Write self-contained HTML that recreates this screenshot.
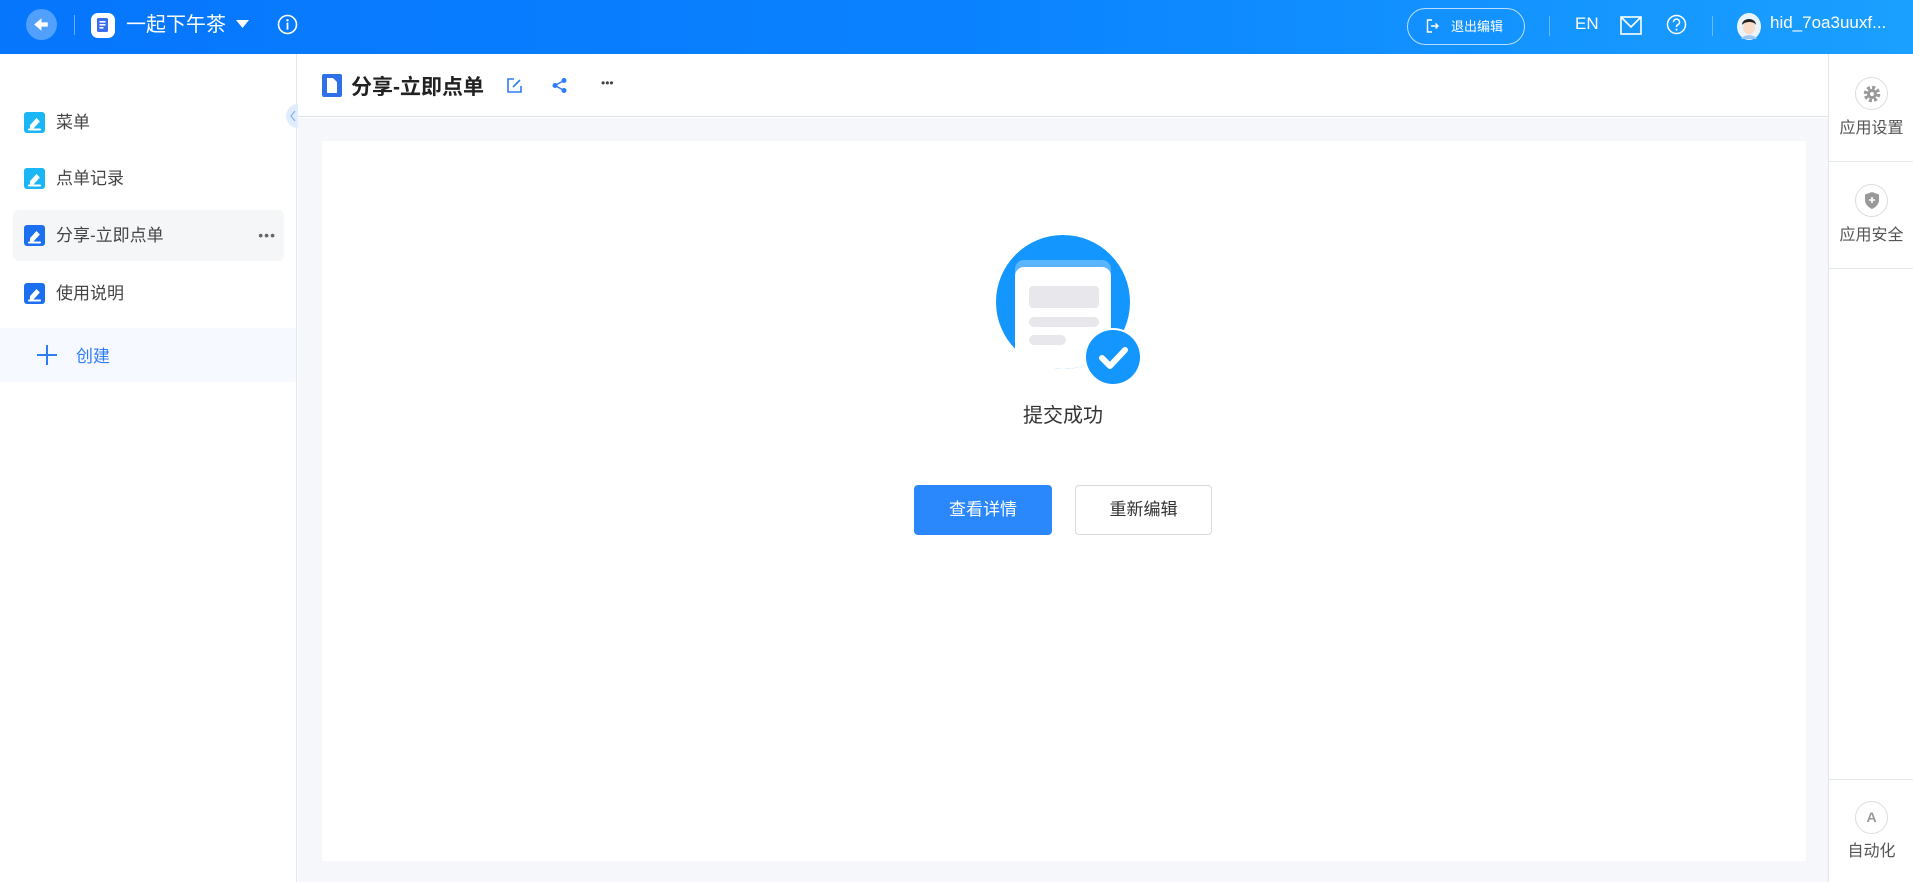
<!DOCTYPE html>
<html><head><meta charset="utf-8"><style>
*{margin:0;padding:0;box-sizing:border-box}
body{width:1913px;height:882px;overflow:hidden;font-family:"Liberation Sans","Noto Sans CJK SC",sans-serif;background:#fff;position:relative;color:#333}
.abs{position:absolute}
#hdr{left:0;top:0;width:1913px;height:54px;background:linear-gradient(90deg,#0676fd 0%,#0a82ff 50%,#1aa0ff 100%);color:#fff}
#side{left:0;top:54px;width:297px;height:828px;border-right:1px solid #e3e6eb;background:#fff}
.item{position:absolute;left:13px;width:271px;height:51px;border-radius:6px;font-size:17px;color:#444;line-height:51px;padding-left:43px}
.item .ic{position:absolute;left:11px;top:15px;width:21px;height:21px;border-radius:3px}
#right{left:1828px;top:54px;width:85px;height:828px;border-left:1px solid #e3e6eb;background:#fff}
.rt{position:absolute;left:0;width:85px;text-align:center;font-size:16px;color:#555}
.rc{position:absolute;left:26px;width:33px;height:33px;border-radius:50%;border:1.5px solid #ddd}
</style></head><body>
<div id="hdr" class="abs">
  <div class="abs" style="left:26px;top:9px;width:31px;height:31px;border-radius:50%;background:rgba(255,255,255,.3)"></div>
  <svg class="abs" style="left:31px;top:14px" width="21" height="21" viewBox="0 0 20 20"><path d="M3 10 L10 4 L10 8 L16 8 L16 12 L10 12 L10 16Z" fill="#fff"/></svg>
  <div class="abs" style="left:74px;top:15px;width:1px;height:20px;background:rgba(255,255,255,.4)"></div>
  <div class="abs" style="left:91px;top:13px;width:24px;height:25px;border-radius:7px;background:#fff"></div>
  <svg class="abs" style="left:96px;top:17px" width="14" height="16" viewBox="0 0 14 16"><rect x="1" y="1" width="11" height="14" rx="1.5" fill="#3a6df0"/><rect x="3.5" y="4" width="6" height="1.6" fill="#fff"/><rect x="3.5" y="7" width="6" height="1.6" fill="#fff"/><rect x="3.5" y="10" width="4" height="1.6" fill="#fff"/></svg>
  <div class="abs" style="left:126px;top:12px;font-size:20px;line-height:26px">一起下午茶</div>
  <svg class="abs" style="left:236px;top:19px" width="13" height="10"><path d="M0 1 L13 1 L6.5 9Z" fill="#fff"/></svg>
  <svg class="abs" style="left:277px;top:14px" width="21" height="21" viewBox="0 0 21 21"><circle cx="10.5" cy="10.5" r="9" fill="none" stroke="#fff" stroke-width="1.6"/><circle cx="10.5" cy="6.3" r="1.2" fill="#fff"/><rect x="9.6" y="8.6" width="1.8" height="7" fill="#fff"/></svg>
  <div class="abs" style="left:1407px;top:8px;width:118px;height:37px;border:1px solid rgba(255,255,255,.7);border-radius:19px;font-size:13px;line-height:35px;padding-left:43px">退出编辑</div>
  <svg class="abs" style="left:1426px;top:19px" width="14" height="14" viewBox="0 0 14 14"><path d="M6 1H1.5V13H6" fill="none" stroke="#fff" stroke-width="1.4"/><path d="M5 7H12M9.5 4.5L12 7L9.5 9.5" fill="none" stroke="#fff" stroke-width="1.4"/></svg>
  <div class="abs" style="left:1549px;top:16px;width:1px;height:20px;background:rgba(255,255,255,.35)"></div>
  <div class="abs" style="left:1575px;top:14px;font-size:17px">EN</div>
  <svg class="abs" style="left:1620px;top:16px" width="22" height="19" viewBox="0 0 22 19"><rect x="1" y="1" width="20" height="17" fill="none" stroke="#fff" stroke-width="1.6"/><path d="M1 1L11 11L21 1" fill="none" stroke="#fff" stroke-width="1.6"/></svg>
  <svg class="abs" style="left:1666px;top:14px" width="21" height="21" viewBox="0 0 21 21"><circle cx="10.5" cy="10.5" r="9" fill="none" stroke="#fff" stroke-width="1.5"/><path d="M7.5 8.2a3 3 0 1 1 4.3 2.6c-1 .5-1.3 1-1.3 2.2" fill="none" stroke="#fff" stroke-width="1.5"/><circle cx="10.5" cy="15.6" r="1" fill="#fff"/></svg>
  <div class="abs" style="left:1712px;top:16px;width:1px;height:20px;background:rgba(255,255,255,.35)"></div>
  <svg class="abs" style="left:1736px;top:12px" width="26" height="29" viewBox="0 0 26 29"><ellipse cx="13" cy="14.5" rx="12" ry="13.5" fill="#eaf4ff"/><ellipse cx="13" cy="15" rx="6" ry="7.5" fill="#f8dcc8"/><path d="M6 13C6 5 20 5 20 13C18 9 9 9 6 13Z" fill="#222"/><path d="M5 27C7 22 19 22 21 27Z" fill="#9cc6f0"/></svg>
  <div class="abs" style="left:1770px;top:13px;font-size:17px">hid_7oa3uuxf...</div>
</div>

<div id="side" class="abs">
  <div class="item" style="top:43px"><div class="ic" style="background:#1bb6f5"></div>菜单</div>
  <div class="item" style="top:99px"><div class="ic" style="background:#1bb6f5"></div>点单记录</div>
  <div class="item" style="top:156px;background:#f5f6f7"><div class="ic" style="background:#1c6fee"></div>分享-立即点单<span style="position:absolute;right:8px;top:0;color:#666;font-size:14px;letter-spacing:1px">•••</span></div>
  <div class="item" style="top:214px"><div class="ic" style="background:#1c6fee"></div>使用说明</div>
  <div class="abs" style="left:0;top:274px;width:296px;height:54px;background:#f6f9ff"></div>
  <div class="abs" style="left:37px;top:300px;width:20px;height:2px;background:#2e7cf6"></div>
  <div class="abs" style="left:46px;top:291px;width:2px;height:20px;background:#2e7cf6"></div>
  <div class="abs" style="left:76px;top:288px;font-size:17px;color:#2e7cf6">创建</div>
  <div class="abs" style="left:286px;top:50px;width:12px;height:24px;border-radius:12px 0 0 12px;background:#e0ecff"></div>
</div>
<svg class="abs" style="left:24px;top:112px" width="21" height="200" viewBox="0 0 21 200">
  <g fill="none" stroke="#fff" stroke-width="2" stroke-linecap="round"><path d="M7 13.5L12.5 7.5L14.5 9.5L9 15.5H7Z" fill="#fff"/><path d="M5 17.5H16"/></g>
  <g transform="translate(0,56)" fill="none" stroke="#fff" stroke-width="2" stroke-linecap="round"><path d="M7 13.5L12.5 7.5L14.5 9.5L9 15.5H7Z" fill="#fff"/><path d="M5 17.5H16"/></g>
  <g transform="translate(0,113)" fill="none" stroke="#fff" stroke-width="2" stroke-linecap="round"><path d="M7 13.5L12.5 7.5L14.5 9.5L9 15.5H7Z" fill="#fff"/><path d="M5 17.5H16"/></g>
  <g transform="translate(0,171)" fill="none" stroke="#fff" stroke-width="2" stroke-linecap="round"><path d="M7 13.5L12.5 7.5L14.5 9.5L9 15.5H7Z" fill="#fff"/><path d="M5 17.5H16"/></g>
</svg>
<svg class="abs" style="left:289px;top:110px" width="8" height="12"><path d="M6 1L2 6L6 11" fill="none" stroke="#8ab0e8" stroke-width="1.2"/></svg>

<div class="abs" style="left:298px;top:54px;width:1530px;height:63px;background:#fff;border-bottom:1px solid #dfe2e6"></div>
<svg class="abs" style="left:322px;top:74px" width="20" height="23" viewBox="0 0 20 23"><rect width="20" height="23" rx="2" fill="#2f6fe8"/><path d="M5 4H11L15 8V19H5Z" fill="#fff"/></svg>
<div class="abs" style="left:351px;top:71px;font-size:21px;font-weight:bold;color:#222">分享-立即点单</div>
<svg class="abs" style="left:506px;top:77px" width="17" height="17" viewBox="0 0 17 17"><path d="M8 2H2V15H15V9" fill="none" stroke="#2e7cf6" stroke-width="1.6"/><path d="M7 10L14 3" stroke="#2e7cf6" stroke-width="1.6"/></svg>
<svg class="abs" style="left:551px;top:77px" width="17" height="17" viewBox="0 0 17 17"><circle cx="13" cy="3.5" r="2.5" fill="#2e7cf6"/><circle cx="4" cy="8.5" r="2.5" fill="#2e7cf6"/><circle cx="13" cy="13.5" r="2.5" fill="#2e7cf6"/><path d="M13 3.5L4 8.5L13 13.5" fill="none" stroke="#2e7cf6" stroke-width="1.5"/></svg>
<div class="abs" style="left:601px;top:76px;font-size:12px;color:#444">•••</div>
<div class="abs" style="left:298px;top:118px;width:1530px;height:764px;background:#f5f7fa"></div>
<div class="abs" style="left:322px;top:141px;width:1484px;height:720px;background:#fff"></div>
<svg class="abs" style="left:990px;top:230px" width="160" height="160" viewBox="990 230 160 160">
  <defs><clipPath id="cc"><circle cx="1063" cy="302" r="67"/></clipPath></defs>
  <circle cx="1063" cy="302" r="67" fill="#1496ff"/>
  <g clip-path="url(#cc)"><rect x="1015" y="260" width="96" height="140" rx="9" fill="#5ab4ff"/><rect x="1015" y="267" width="96" height="140" rx="9" fill="#fff"/></g>
  <rect x="1015" y="330" width="40" height="40" fill="#fff"/>
  <rect x="1029" y="286" width="70" height="22" rx="4" fill="#e8e8ec"/>
  <rect x="1029" y="317" width="70" height="10" rx="5" fill="#e8e8ec"/>
  <rect x="1029" y="335" width="37" height="10" rx="5" fill="#e8e8ec"/>
  <circle cx="1113" cy="357" r="29" fill="#fff"/>
  <circle cx="1113" cy="357" r="27" fill="#1496ff"/>
  <path d="M1102 358L1110 366L1125 350" fill="none" stroke="#fff" stroke-width="6" stroke-linecap="round" stroke-linejoin="round"/>
</svg>
<div class="abs" style="left:963px;top:399px;width:200px;text-align:center;font-size:20px;color:#333">提交成功</div>
<div class="abs" style="left:914px;top:485px;width:138px;height:50px;background:#2a88fc;border-radius:4px;color:#fff;font-size:17px;line-height:50px;text-align:center">查看详情</div>
<div class="abs" style="left:1075px;top:485px;width:137px;height:50px;border:1px solid #d9d9d9;border-radius:4px;color:#333;font-size:17px;line-height:48px;text-align:center">重新编辑</div>

<div id="right" class="abs">
  <div class="rc" style="top:23px"></div>
  <svg class="abs" style="left:33px;top:30px" width="20" height="20" viewBox="0 0 20 20"><circle cx="10" cy="10" r="6.5" fill="none" stroke="#999" stroke-width="3.5" stroke-dasharray="3 2.1"/><circle cx="10" cy="10" r="5" fill="#999"/><circle cx="10" cy="10" r="2" fill="#fff"/></svg>
  <div class="rt" style="top:60px">应用设置</div>
  <div class="abs" style="left:0;top:107px;width:85px;height:1px;background:#e3e6eb"></div>
  <div class="rc" style="top:130px"></div>
  <svg class="abs" style="left:35px;top:137px" width="16" height="19" viewBox="0 0 16 19"><path d="M8 1L15 3.5V9C15 13 12 16 8 18C4 16 1 13 1 9V3.5Z" fill="#999"/><path d="M8 6V12M5 9H11" stroke="#fff" stroke-width="1.6"/></svg>
  <div class="rt" style="top:167px">应用安全</div>
  <div class="abs" style="left:0;top:214px;width:85px;height:1px;background:#e3e6eb"></div>
  <div class="abs" style="left:0;top:725px;width:85px;height:1px;background:#e3e6eb"></div>
  <div class="rc" style="top:747px"></div>
  <div class="abs" style="left:26px;top:747px;width:33px;height:33px;text-align:center;line-height:33px;font-size:14px;font-weight:bold;color:#999">A</div>
  <div class="rt" style="top:783px">自动化</div>
</div>
</body></html>
